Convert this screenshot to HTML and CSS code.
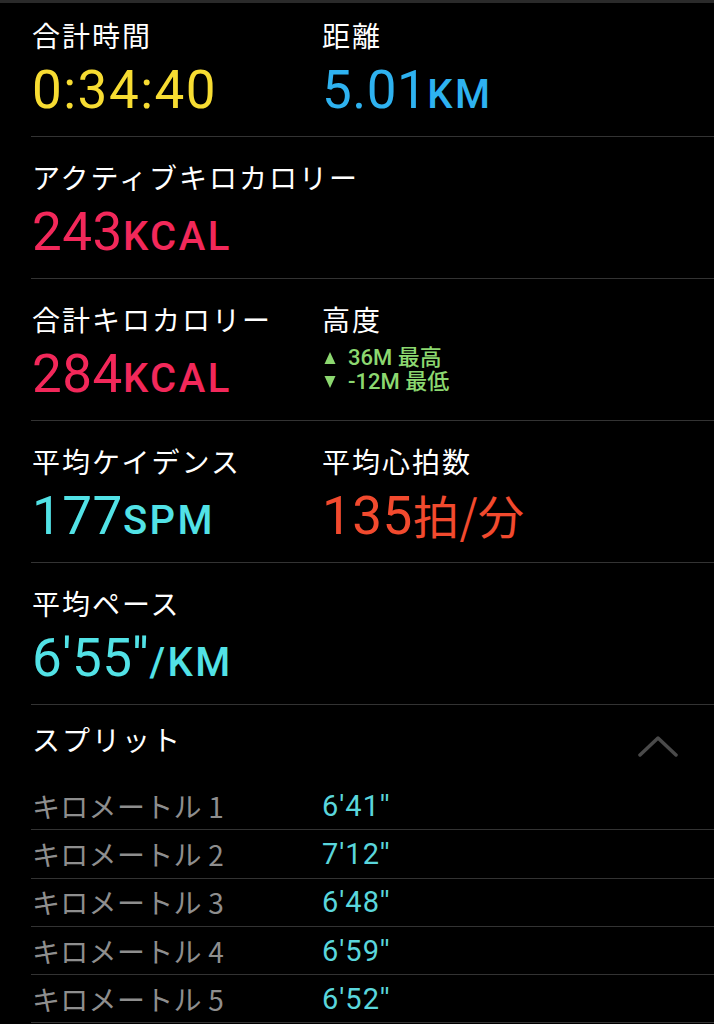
FILE: index.html
```html
<!DOCTYPE html>
<html lang="ja">
<head>
<meta charset="utf-8">
<title>ワークアウト</title>
<link rel="stylesheet" href="styles.css">
</head>
<body>
<div class="page">
  <section class="sec first">
    <div class="col">
      <div class="label">合計時間</div>
      <div class="value yellow time">0:34:40</div>
    </div>
    <div class="col">
      <div class="label">距離</div>
      <div class="value blue">5.01<span class="unit">KM</span></div>
    </div>
  </section>

  <section class="sec">
    <div class="col">
      <div class="label">アクティブキロカロリー</div>
      <div class="value pink">243<span class="unit">KCAL</span></div>
    </div>
  </section>

  <section class="sec">
    <div class="col">
      <div class="label">合計キロカロリー</div>
      <div class="value pink">284<span class="unit">KCAL</span></div>
    </div>
    <div class="col">
      <div class="label">高度</div>
      <div class="alt">
        <div class="alt-line"><svg class="tri" width="12" height="14" viewBox="0 0 12 14"><path d="M6 1 L11.5 13 L0.5 13 Z" fill="#8cd870"/></svg>36M 最高</div>
        <div class="alt-line"><svg class="tri" width="12" height="14" viewBox="0 0 12 14"><path d="M0.5 1 L11.5 1 L6 13 Z" fill="#8cd870"/></svg>-12M 最低</div>
      </div>
    </div>
  </section>

  <section class="sec">
    <div class="col">
      <div class="label">平均ケイデンス</div>
      <div class="value cyan">177<span class="unit">SPM</span></div>
    </div>
    <div class="col">
      <div class="label">平均心拍数</div>
      <div class="value red">135<span class="unit-jp">拍/分</span></div>
    </div>
  </section>

  <section class="sec">
    <div class="col">
      <div class="label">平均ペース</div>
      <div class="value cyan">6'55''<span class="unit">/KM</span></div>
    </div>
  </section>

  <section class="splits">
    <div class="splits-head">
      <div class="label">スプリット</div>
      <svg class="chev" width="40" height="22" viewBox="0 0 40 22">
        <path d="M2 20 L20 3 L38 20" fill="none" stroke="#4a4a4a" stroke-width="3.5" stroke-linecap="round" stroke-linejoin="round"/>
      </svg>
    </div>
    <div class="row"><span class="r-name">キロメートル 1</span><span class="r-val">6'41''</span></div>
    <div class="row"><span class="r-name">キロメートル 2</span><span class="r-val">7'12''</span></div>
    <div class="row"><span class="r-name">キロメートル 3</span><span class="r-val">6'48''</span></div>
    <div class="row"><span class="r-name">キロメートル 4</span><span class="r-val">6'59''</span></div>
    <div class="row"><span class="r-name">キロメートル 5</span><span class="r-val">6'52''</span></div>
  </section>
</div>
</body>
</html>
```

FILE: styles.css
```css
html, body {
  margin: 0;
  padding: 0;
  background: #000;
}
body {
  font-family: "Noto Sans CJK JP", "Noto Sans", sans-serif;
  color: #fff;
}
.page {
  border-top: 3px solid #2a2a2a;
  overflow: hidden;
  height: 1021px;
}
.sec {
  margin-left: 31px;
  padding: 23px 0 18px 1px;
  border-bottom: 1px solid #333;
  display: grid;
  grid-template-columns: 290px 1fr;
}
.sec.first {
  padding-top: 15px;
  padding-bottom: 18px;
}
.label {
  font-size: 28px;
  line-height: 34px;
  letter-spacing: 2px;
  color: #fff;
  white-space: nowrap;
}
.value {
  margin-top: 10px;
  font-family: Roboto, "Noto Sans", sans-serif;
  font-size: 53px;
  line-height: 56px;
  letter-spacing: 0.5px;
  white-space: nowrap;
}
.value.time {
  letter-spacing: 1.5px;
}
.unit {
  font-size: 40px;
  line-height: 1;
  font-weight: 500;
  letter-spacing: 2.5px;
}
.unit-jp {
  font-family: "Noto Sans CJK JP", sans-serif;
  font-size: 46px;
  line-height: 1;
}
.yellow { color: #f7dc32; }
.blue { color: #2eb2f0; }
.pink { color: #f2285a; }
.cyan { color: #52e2e6; }
.red { color: #f24a2e; }
.alt {
  margin-top: 10px;
  color: #8cd870;
  font-family: Roboto, "Noto Sans CJK JP", sans-serif;
  font-size: 22px;
  font-weight: 500;
  line-height: 24px;
}
.alt-line {
  display: flex;
  align-items: center;
}
.tri {
  margin: 0 12px 0 2px;
  flex: none;
}
.splits {
  margin-left: 31px;
}
.splits-head {
  display: flex;
  justify-content: space-between;
  align-items: center;
  padding: 16px 36px 25px 1px;
}
.chev {
  margin-top: 14px;
}
.row {
  display: grid;
  grid-template-columns: 290px 1fr;
  height: 47.3px;
  align-items: center;
  border-bottom: 1px solid #333;
  padding-left: 1px;
  font-size: 28px;
  line-height: 32px;
}
.r-name {
  color: #8e8e8e;
  letter-spacing: 0.3px;
  white-space: nowrap;
}
.r-val {
  color: #5ad6dc;
  font-family: Roboto, sans-serif;
  font-size: 29px;
  letter-spacing: 1px;
}
```
